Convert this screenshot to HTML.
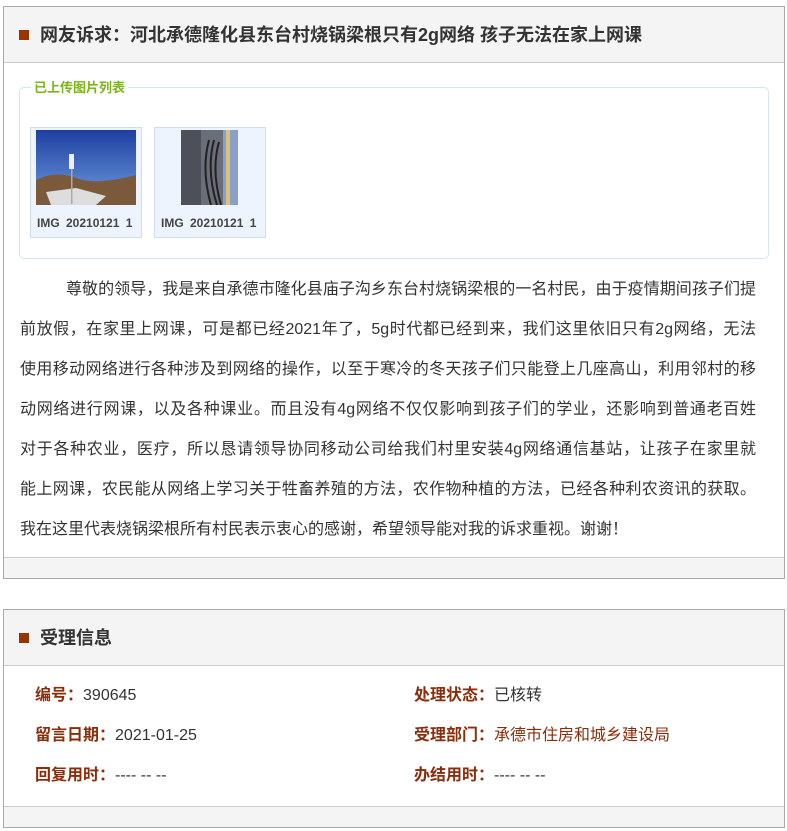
<!DOCTYPE html>
<html><head><meta charset="utf-8"><style>
*{margin:0;padding:0;box-sizing:border-box}
body{width:787px;height:831px;background:#fff;font-family:"Liberation Sans","Noto Sans CJK SC",sans-serif;color:#333;position:relative;overflow:hidden}
.panel{position:absolute;left:3px;width:782px;border:1px solid #aaa;background:#fff}
.hd{height:56px;background:#f4f4f4;border-bottom:1px solid #ccc;position:relative}
.hd i{position:absolute;left:15px;top:23px;width:10px;height:10px;background:#993300}
.hd b{position:absolute;left:36px;top:16px;font-size:18px;line-height:24px;color:#333}
.ft{height:21px;background:#f4f4f4;border-top:1px solid #ccc;position:absolute;left:0;right:0;bottom:0}
.fs{position:absolute;left:15px;top:80px;width:750px;height:172px;border:1px solid #d5e3f3;border-radius:5px}
.lg{position:absolute;left:27px;top:73px;background:#fff;padding:0 3px;font-size:13px;font-weight:bold;color:#7cb518;line-height:16px}
.th{position:absolute;top:120px;width:112px;height:111px;border:1px solid #cfdcec;background:#eef4fd}
.th span{position:absolute;left:6px;top:88px;font-size:12px;font-weight:bold;color:#444;white-space:nowrap;word-spacing:3px}
.txt{position:absolute;left:16px;top:263px;width:736px;font-size:16px;line-height:40px;color:#333}
.txt div{text-align:justify;text-align-last:justify;white-space:nowrap}
.row{position:absolute;font-size:16px;line-height:20px;color:#333}
.row b{color:#8b2c0a}
</style></head><body>
<div class="panel" style="top:6px;height:573px">
 <div class="hd"><i></i><b>网友诉求：河北承德隆化县东台村烧锅梁根只有2g网络 孩子无法在家上网课</b></div>
 <div class="fs"></div>
 <div class="lg">已上传图片列表</div>
 <div class="th" style="left:26px">
  <svg style="position:absolute;left:5px;top:2px" width="100" height="75"><defs><linearGradient id="s" x1="0" y1="0" x2="0" y2="1"><stop offset="0" stop-color="#1f3fa0"/><stop offset="1" stop-color="#6f9ee0"/></linearGradient></defs><rect width="100" height="75" fill="url(#s)"/><path d="M0 50 Q20 40 40 48 T100 45 V75 H0Z" fill="#7a5a3a"/><path d="M10 62 L40 58 L70 66 L60 75 H15Z" fill="#ddd"/><rect x="33" y="24" width="5" height="15" fill="#eee"/><rect x="35" y="39" width="1.5" height="35" fill="#aaa"/></svg>
  <span>IMG 20210121 1</span></div>
 <div class="th" style="left:150px">
  <svg style="position:absolute;left:26px;top:2px" width="57" height="75"><rect width="57" height="75" fill="#6a6e78"/><rect x="0" y="0" width="20" height="75" fill="#4d5058"/><rect x="42" y="0" width="15" height="75" fill="#8aa0c8"/><rect x="45" y="0" width="4" height="75" fill="#d9c27a"/><path d="M28 10 Q20 40 30 75 M33 10 Q25 40 36 75 M38 12 Q30 40 40 75" stroke="#222" stroke-width="2" fill="none"/></svg>
  <span>IMG 20210121 1</span></div>
 <div class="txt">
  <div style="padding-left:46px">尊敬的领导，我是来自承德市隆化县庙子沟乡东台村烧锅梁根的一名村民，由于疫情期间孩子们提</div>
  <div>前放假，在家里上网课，可是都已经2021年了，5g时代都已经到来，我们这里依旧只有2g网络，无法</div>
  <div>使用移动网络进行各种涉及到网络的操作，以至于寒冷的冬天孩子们只能登上几座高山，利用邻村的移</div>
  <div>动网络进行网课，以及各种课业。而且没有4g网络不仅仅影响到孩子们的学业，还影响到普通老百姓</div>
  <div>对于各种农业，医疗，所以恳请领导协同移动公司给我们村里安装4g网络通信基站，让孩子在家里就</div>
  <div>能上网课，农民能从网络上学习关于牲畜养殖的方法，农作物种植的方法，已经各种利农资讯的获取。</div>
  <div style="text-align:left;text-align-last:left">我在这里代表烧锅梁根所有村民表示衷心的感谢，希望领导能对我的诉求重视。谢谢！</div>
 </div>
 <div class="ft"></div>
</div>
<div class="panel" style="top:609px;height:219px">
 <div class="hd"><i></i><b>受理信息</b></div>
 <div class="row" style="left:31px;top:76px"><b>编号：</b>390645</div>
 <div class="row" style="left:31px;top:116px"><b>留言日期：</b>2021-01-25</div>
 <div class="row" style="left:31px;top:156px"><b>回复用时：</b>---- -- --</div>
 <div class="row" style="left:410px;top:76px"><b>处理状态：</b>已核转</div>
 <div class="row" style="left:410px;top:116px"><b>受理部门：</b><span style="color:#8b2c0a">承德市住房和城乡建设局</span></div>
 <div class="row" style="left:410px;top:156px"><b>办结用时：</b>---- -- --</div>
 <div class="ft"></div>
</div>
</body></html>
